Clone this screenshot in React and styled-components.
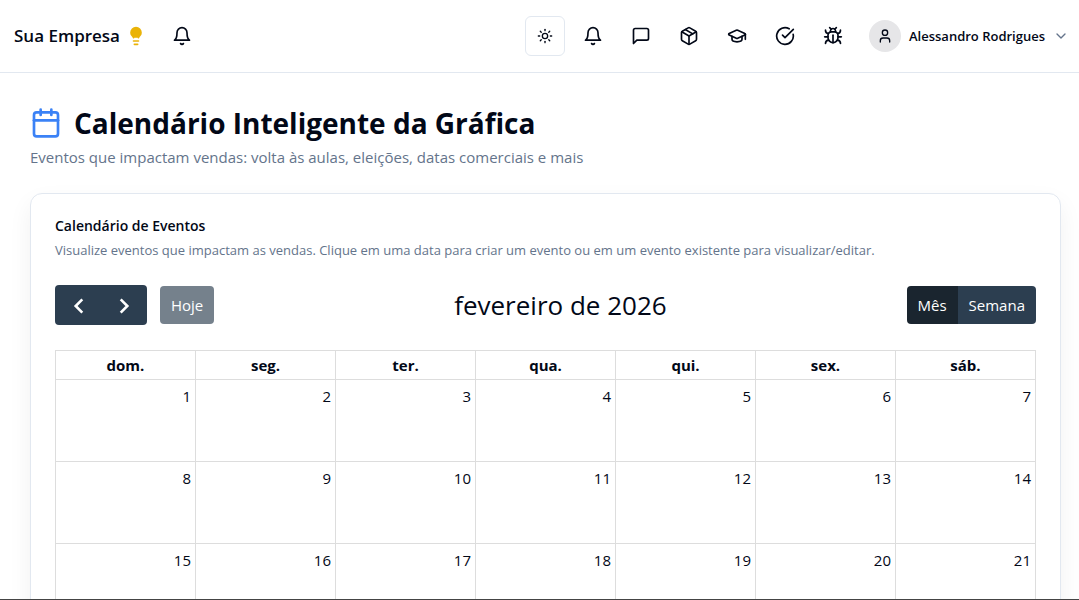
import React, { useState } from "react";
import styled, { createGlobalStyle } from "styled-components";
import {
  Calendar,
  ChevronDown,
  CircleCheckBig,
  GraduationCap,
  Lightbulb,
  Package,
  Sun,
  User,
} from "lucide-react";

const GlobalStyle = createGlobalStyle`
  :root {
    --text: #020817;
    --muted: #64748b;
    --border: #e2e8f0;
    --grid: #dddddd;
    --button: #2c3e50;
    --buttonActive: #1a252f;
    --blue: #3b82f6;
    --yellow: #eab308;
  }

  *,
  *::before,
  *::after {
    box-sizing: border-box;
  }

  body {
    margin: 0;
    background: #ffffff;
    color: var(--text);
    font-family: "Segoe UI", "Open Sans", "Noto Sans", sans-serif;
    font-size: 16px;
    line-height: 24px;
  }

  h1, h2, h3, p {
    margin: 0;
  }

  button {
    font: inherit;
    color: inherit;
    cursor: pointer;
  }
`;

const Page = styled.div`
  height: 100vh;
  display: flex;
  flex-direction: column;
  overflow: hidden;
  border-bottom: 1px solid #444444;
`;

const TopBar = styled.header`
  display: flex;
  justify-content: space-between;
  align-items: center;
  flex: none;
  height: 73px;
  padding: 0 10px 0 14px;
  border-bottom: 1px solid var(--border);
`;

const Brand = styled.div`
  display: flex;
  align-items: center;
  gap: 16px;
`;

const BrandLink = styled.a`
  display: flex;
  align-items: center;
  gap: 6px;
  color: inherit;
  font-size: 17px;
  font-weight: 600;
  text-decoration: none;
`;

const Actions = styled.div`
  display: flex;
  align-items: center;
  gap: 8px;
`;

const IconButton = styled.button`
  display: flex;
  justify-content: center;
  align-items: center;
  width: 40px;
  height: 40px;
  padding: 0;
  border: 1px solid ${(props) => (props.$outlined ? "var(--border)" : "transparent")};
  border-radius: 6px;
  background: transparent;
`;

const UserButton = styled.button`
  display: flex;
  align-items: center;
  gap: 8px;
  margin-left: 8px;
  padding: 0;
  border: 0;
  background: transparent;
  font-size: 13px;
  font-weight: 600;

  & > svg {
    color: var(--muted);
  }
`;

const Avatar = styled.span`
  display: flex;
  justify-content: center;
  align-items: center;
  width: 32px;
  height: 32px;
  border-radius: 50%;
  background: #e6e6e8;
`;

const Main = styled.main`
  flex: 1;
  min-height: 0;
  padding: 32px 18px 0 30px;
`;

const PageTitle = styled.h1`
  display: flex;
  align-items: center;
  gap: 12px;
  font-size: 28px;
  font-weight: 700;
  line-height: 36px;

  svg {
    color: var(--blue);
  }
`;

const PageSubtitle = styled.p`
  margin-top: 4px;
  font-size: 15px;
  color: var(--muted);
`;

const Card = styled.section`
  margin-top: 24px;
  padding: 24px;
  border: 1px solid var(--border);
  border-radius: 12px;
  box-shadow: 0 10px 24px rgba(15, 23, 42, 0.06);
`;

const CardTitle = styled.h3`
  font-size: 14px;
  font-weight: 600;
  line-height: 16px;
`;

const CardDescription = styled.p`
  margin-top: 6px;
  font-size: 13px;
  line-height: 20px;
  color: var(--muted);
`;

const Toolbar = styled.div`
  display: flex;
  justify-content: space-between;
  align-items: center;
  margin: 25px 0;
`;

const ToolbarTitle = styled.h2`
  font-size: 26px;
  font-weight: 400;
  line-height: 40px;
`;

const ToolbarGroup = styled.div`
  display: flex;
  align-items: center;
  gap: 13px;
`;

const ButtonGroup = styled.div`
  display: flex;
  border-radius: 4px;
  overflow: hidden;
`;

const ToolbarButton = styled.button`
  display: flex;
  justify-content: center;
  align-items: center;
  height: ${(props) => (props.$icon ? "40px" : "38px")};
  padding: 0 11px;
  border: 0;
  background: ${(props) => (props.$active ? "var(--buttonActive)" : "var(--button)")};
  color: #ffffff;
  font-size: 15px;

  &:disabled {
    border-radius: 4px;
    opacity: 0.65;
    cursor: default;
  }
`;

const CalendarTable = styled.table`
  width: 100%;
  table-layout: fixed;
  border-collapse: collapse;

  th,
  td {
    border: 1px solid var(--grid);
  }

  th {
    height: 29px;
    padding: 2px;
    font-size: 15px;
    font-weight: 700;
  }

  td {
    height: 82px;
    padding: 4px;
    font-size: 15px;
    text-align: right;
    vertical-align: top;
  }
`;

const weekDays = ["dom.", "seg.", "ter.", "qua.", "qui.", "sex.", "sáb."];

const weeks = [0, 1, 2].map((week) =>
  weekDays.map((_, day) => week * 7 + day + 1)
);

function Icon({ children }) {
  return (
    <svg
      width="20"
      height="20"
      viewBox="0 0 24 24"
      fill="none"
      stroke="currentColor"
      strokeWidth="2"
      strokeLinecap="round"
      strokeLinejoin="round"
      aria-hidden="true"
    >
      {children}
    </svg>
  );
}

function BellIcon() {
  return (
    <Icon>
      <path d="M6 8a6 6 0 0 1 12 0c0 7 3 9 3 9H3s3-2 3-9" />
      <path d="M10.3 21a1.94 1.94 0 0 0 3.4 0" />
    </Icon>
  );
}

function MessageIcon() {
  return (
    <Icon>
      <path d="M21 15a2 2 0 0 1-2 2H7l-4 4V5a2 2 0 0 1 2-2h14a2 2 0 0 1 2 2z" />
    </Icon>
  );
}

function BugIcon() {
  return (
    <Icon>
      <path d="m8 2 1.88 1.88" />
      <path d="M14.12 3.88 16 2" />
      <path d="M9 7.13v-1a3.003 3.003 0 1 1 6 0v1" />
      <path d="M12 20c-3.3 0-6-2.7-6-6v-3a4 4 0 0 1 4-4h4a4 4 0 0 1 4 4v3c0 3.3-2.7 6-6 6" />
      <path d="M12 20v-9" />
      <path d="M6.53 9C4.6 8.8 3 7.1 3 5" />
      <path d="M6 13H2" />
      <path d="M3 21c0-2.1 1.7-3.9 3.8-4" />
      <path d="M20.97 5c0 2.1-1.6 3.8-3.5 4" />
      <path d="M22 13h-4" />
      <path d="M17.2 17c2.1.1 3.8 1.9 3.8 4" />
    </Icon>
  );
}

function ArrowIcon({ points }) {
  return (
    <svg
      width="24"
      height="24"
      viewBox="0 0 24 24"
      fill="none"
      stroke="currentColor"
      strokeWidth="2.6"
      aria-hidden="true"
    >
      <polyline points={points} />
    </svg>
  );
}

function Header() {
  return (
    <TopBar>
      <Brand>
        <BrandLink href="#">
          Sua Empresa
          <Lightbulb size={20} color="var(--yellow)" fill="var(--yellow)" />
        </BrandLink>
        <IconButton aria-label="Avisos">
          <BellIcon />
        </IconButton>
      </Brand>

      <Actions>
        <IconButton $outlined aria-label="Tema">
          <Sun size={16} />
        </IconButton>
        <IconButton aria-label="Notificações">
          <BellIcon />
        </IconButton>
        <IconButton aria-label="Mensagens">
          <MessageIcon />
        </IconButton>
        <IconButton aria-label="Produtos">
          <Package size={20} />
        </IconButton>
        <IconButton aria-label="Treinamentos">
          <GraduationCap size={20} />
        </IconButton>
        <IconButton aria-label="Tarefas">
          <CircleCheckBig size={20} />
        </IconButton>
        <IconButton aria-label="Reportar erro">
          <BugIcon />
        </IconButton>
        <UserButton>
          <Avatar>
            <User size={16} />
          </Avatar>
          Alessandro Rodrigues
          <ChevronDown size={16} />
        </UserButton>
      </Actions>
    </TopBar>
  );
}

function EventCalendar() {
  const [view, setView] = useState("month");

  return (
    <>
      <Toolbar>
        <ToolbarGroup>
          <ButtonGroup>
            <ToolbarButton $icon aria-label="Anterior">
              <ArrowIcon points="16.3,6.4 9.7,13 16.3,19.6" />
            </ToolbarButton>
            <ToolbarButton $icon aria-label="Próximo">
              <ArrowIcon points="8.7,6.4 15.3,13 8.7,19.6" />
            </ToolbarButton>
          </ButtonGroup>
          <ToolbarButton disabled>Hoje</ToolbarButton>
        </ToolbarGroup>

        <ToolbarTitle>fevereiro de 2026</ToolbarTitle>

        <ButtonGroup>
          <ToolbarButton
            $active={view === "month"}
            onClick={() => setView("month")}
          >
            Mês
          </ToolbarButton>
          <ToolbarButton
            $active={view === "week"}
            onClick={() => setView("week")}
          >
            Semana
          </ToolbarButton>
        </ButtonGroup>
      </Toolbar>

      <CalendarTable>
        <thead>
          <tr>
            {weekDays.map((day) => (
              <th key={day} scope="col">
                {day}
              </th>
            ))}
          </tr>
        </thead>
        <tbody>
          {weeks.map((days) => (
            <tr key={days[0]}>
              {days.map((day) => (
                <td key={day}>{day}</td>
              ))}
            </tr>
          ))}
        </tbody>
      </CalendarTable>
    </>
  );
}

export default function App() {
  return (
    <>
      <GlobalStyle />
      <Page>
        <Header />
        <Main>
          <PageTitle>
            <Calendar size={32} />
            Calendário Inteligente da Gráfica
          </PageTitle>
          <PageSubtitle>
            Eventos que impactam vendas: volta às aulas, eleições, datas
            comerciais e mais
          </PageSubtitle>

          <Card>
            <CardTitle>Calendário de Eventos</CardTitle>
            <CardDescription>
              Visualize eventos que impactam as vendas. Clique em uma data para
              criar um evento ou em um evento existente para visualizar/editar.
            </CardDescription>
            <EventCalendar />
          </Card>
        </Main>
      </Page>
    </>
  );
}
